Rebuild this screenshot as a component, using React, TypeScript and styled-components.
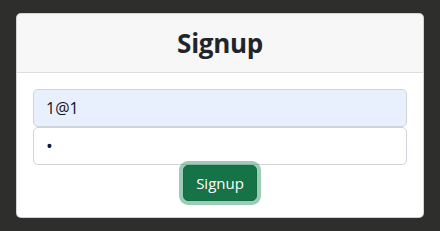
import { createGlobalStyle, styled } from "styled-components";

const GlobalStyle = createGlobalStyle`
    html, body {
        margin: 0;
        padding: 0;
        background-color: #2e2f2c;
        font-family: "Open Sans", "Noto Sans", sans-serif;
    }
`;

const Page = styled.div`
    padding: 13px 16px;
`;

const Card = styled.div`
    background-color: #ffffff;
    border: 1px solid rgba(0, 0, 0, 0.175);
    border-radius: 5px;
    overflow: hidden;
`;

const CardHeader = styled.div`
    height: 58px;
    background-color: #f7f7f7;
    border-bottom: 1px solid #dedede;
    display: flex;
    align-items: center;
    justify-content: center;
`;

const Title = styled.h3`
    margin: 0;
    font-size: 26px;
    font-weight: 700;
    color: #212529;
    letter-spacing: -0.3px;
`;

const CardBody = styled.form`
    padding: 16px;
    display: flex;
    flex-direction: column;
    align-items: center;
`;

const Input = styled.input<{ $filled?: boolean }>`
    box-sizing: border-box;
    width: 100%;
    height: 38px;
    padding: 6px 12px;
    font-family: inherit;
    font-size: 16px;
    color: #111418;
    background-color: ${(p) => (p.$filled ? "#e8f0fe" : "#ffffff")};
    border: 1px solid #ced4da;
    border-radius: 5px;
    outline: none;
`;

const PasswordInput = styled(Input)`
    font-size: 18px;
    color: #0d1b3a;
`;

const SubmitButton = styled.button`
    box-sizing: border-box;
    height: 36px;
    padding: 0 12px;
    font-family: inherit;
    font-size: 15px;
    color: #ffffff;
    background-color: #157347;
    border: 1px solid #146c43;
    border-radius: 5px;
    box-shadow: 0 0 0 4px rgba(60, 153, 110, 0.5);
    cursor: pointer;
`;

export default function App() {
    return (
        <>
            <GlobalStyle />
            <Page>
                <Card>
                    <CardHeader>
                        <Title>Signup</Title>
                    </CardHeader>
                    <CardBody onSubmit={(e) => e.preventDefault()}>
                        <Input $filled type="text" defaultValue="1@1" />
                        <PasswordInput type="password" defaultValue="1" />
                        <SubmitButton type="submit">Signup</SubmitButton>
                    </CardBody>
                </Card>
            </Page>
        </>
    );
}
